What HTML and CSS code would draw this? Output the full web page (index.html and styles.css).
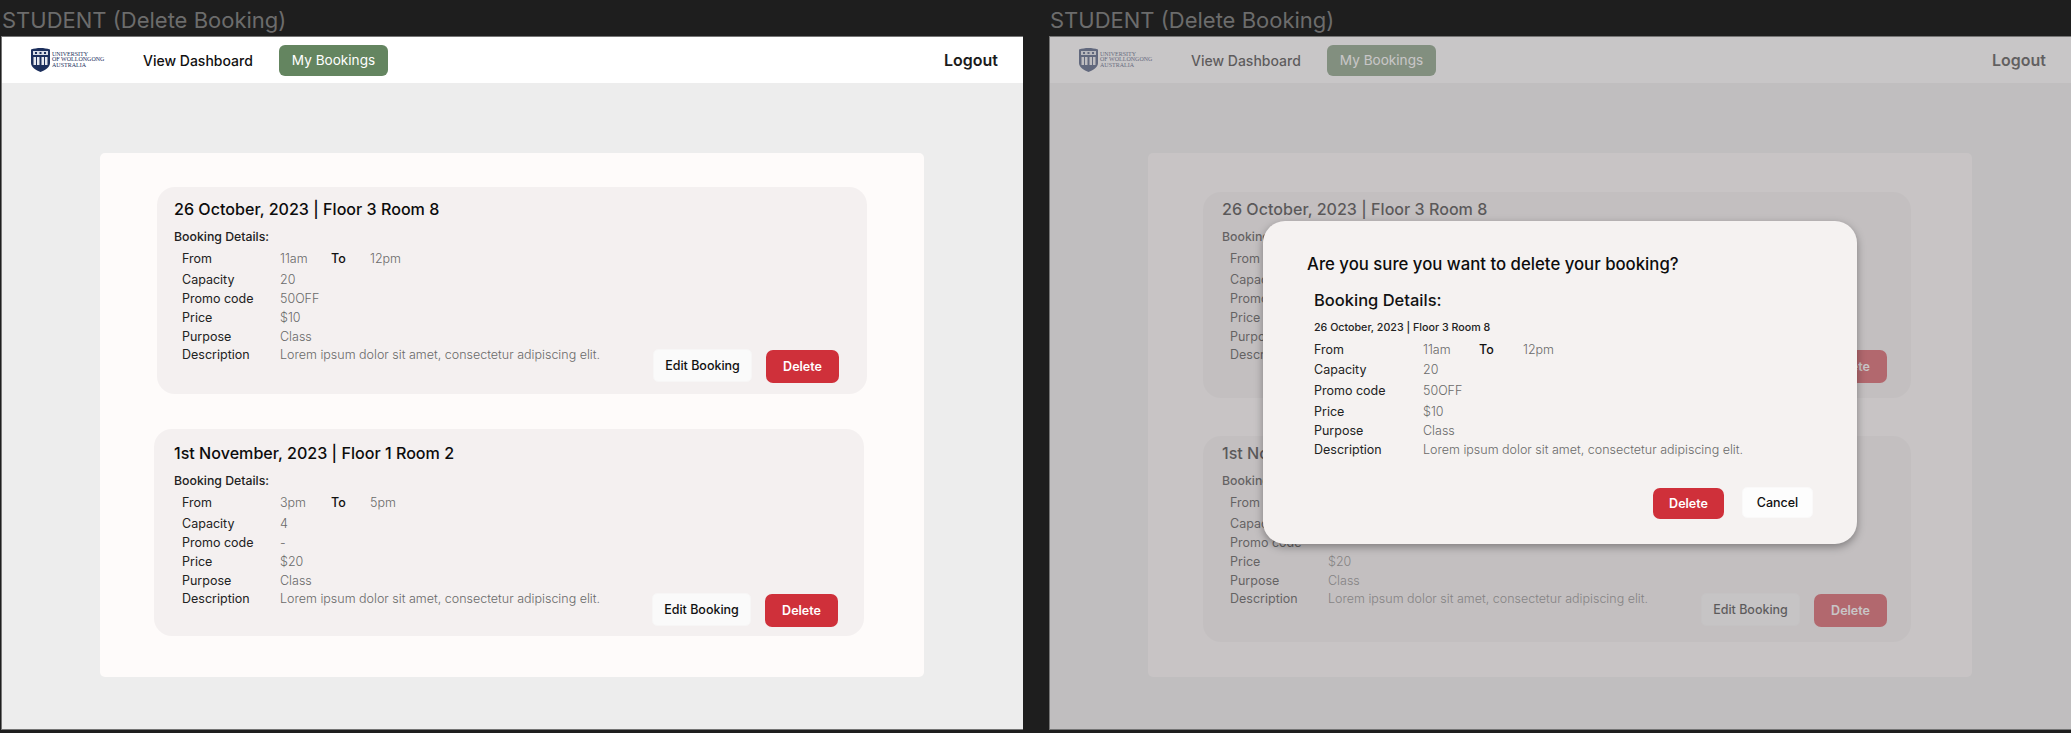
FILE: index.html
```html
<!DOCTYPE html>
<html lang="en">

<head>
  <meta charset="UTF-8">
  <meta name="viewport" content="width=device-width, initial-scale=1.0">
  <title>STUDENT (Delete Booking)</title>
  <link rel="stylesheet" href="styles.css">
</head>

<body>
  <div class="board">

    <section class="screen">
      <h2 class="screen__label">STUDENT (Delete Booking)</h2>
      <div class="frame">
        <nav class="nav">
          <div class="logo">
            <svg class="logo__shield" viewBox="0 0 19 24">
              <path d="M0 1.5 C6 -0.5 13 -0.5 19 1.5 V15 C19 19.5 14 22 9.5 24 C5 22 0 19.5 0 15 Z" fill="#1c2f5c"/>
              <rect x="2" y="3" width="15" height="4" fill="#d9dde6"/>
              <path d="M4 4h2v2H4zM8.500 4h2v2h-2zM13 4h2v2h-2z" fill="#1c2f5c"/>
              <path d="M2.500 9h6v8h-6zM10.500 9h6v8h-6z" fill="#e6e8ee"/>
              <path d="M5 9h1v8H5zM13 9h1v8h-1z" fill="#1c2f5c"/>
            </svg>
            <div class="logo__text">UNIVERSITY<br>OF WOLLONGONG<br>AUSTRALIA</div>
          </div>
          <a class="nav__link">View Dashboard</a>
          <a class="nav__button">My Bookings</a>
          <a class="nav__logout">Logout</a>
        </nav>
        <div class="panel">
          <article class="card card--top">
            <div class="card__info">
              <h3 class="card__title">26 October, 2023 | Floor 3 Room 8</h3>
              <h4 class="card__subtitle">Booking Details:</h4>
              <div class="details">
                <span class="details__label">From</span>
                <div class="details__time">
                  <span class="details__value details__value--from">11am</span>
                  <span class="details__label details__label--to">To</span>
                  <span class="details__value">12pm</span>
                </div>
                <span class="details__label">Capacity</span><span class="details__value">20</span>
                <span class="details__label">Promo code</span><span class="details__value">50OFF</span>
                <span class="details__label">Price</span><span class="details__value">$10</span>
                <span class="details__label">Purpose</span><span class="details__value">Class</span>
                <span class="details__label">Description</span><span class="details__value">Lorem ipsum dolor sit amet, consectetur adipiscing elit.</span>
              </div>
            </div>
            <div class="card__actions">
              <button class="button button--edit">Edit Booking</button>
              <button class="button button--delete">Delete</button>
            </div>
          </article>
          <article class="card card--bottom">
            <div class="card__info">
              <h3 class="card__title">1st November, 2023 | Floor 1 Room 2</h3>
              <h4 class="card__subtitle">Booking Details:</h4>
              <div class="details">
                <span class="details__label">From</span>
                <div class="details__time">
                  <span class="details__value details__value--from">3pm</span>
                  <span class="details__label details__label--to">To</span>
                  <span class="details__value">5pm</span>
                </div>
                <span class="details__label">Capacity</span><span class="details__value">4</span>
                <span class="details__label">Promo code</span><span class="details__value">-</span>
                <span class="details__label">Price</span><span class="details__value">$20</span>
                <span class="details__label">Purpose</span><span class="details__value">Class</span>
                <span class="details__label">Description</span><span class="details__value">Lorem ipsum dolor sit amet, consectetur adipiscing elit.</span>
              </div>
            </div>
            <div class="card__actions">
              <button class="button button--edit">Edit Booking</button>
              <button class="button button--delete">Delete</button>
            </div>
          </article>
        </div>
      </div>
    </section>

    <section class="screen">
      <h2 class="screen__label">STUDENT (Delete Booking)</h2>
      <div class="frame frame--dim">
        <nav class="nav">
          <div class="logo">
            <svg class="logo__shield" viewBox="0 0 19 24">
              <path d="M0 1.5 C6 -0.5 13 -0.5 19 1.5 V15 C19 19.5 14 22 9.5 24 C5 22 0 19.5 0 15 Z" fill="#1c2f5c"/>
              <rect x="2" y="3" width="15" height="4" fill="#d9dde6"/>
              <path d="M4 4h2v2H4zM8.500 4h2v2h-2zM13 4h2v2h-2z" fill="#1c2f5c"/>
              <path d="M2.500 9h6v8h-6zM10.500 9h6v8h-6z" fill="#e6e8ee"/>
              <path d="M5 9h1v8H5zM13 9h1v8h-1z" fill="#1c2f5c"/>
            </svg>
            <div class="logo__text">UNIVERSITY<br>OF WOLLONGONG<br>AUSTRALIA</div>
          </div>
          <a class="nav__link">View Dashboard</a>
          <a class="nav__button">My Bookings</a>
          <a class="nav__logout">Logout</a>
        </nav>
        <div class="panel">
          <article class="card card--top">
            <div class="card__info">
              <h3 class="card__title">26 October, 2023 | Floor 3 Room 8</h3>
              <h4 class="card__subtitle">Booking Details:</h4>
              <div class="details">
                <span class="details__label">From</span>
                <div class="details__time">
                  <span class="details__value details__value--from">11am</span>
                  <span class="details__label details__label--to">To</span>
                  <span class="details__value">12pm</span>
                </div>
                <span class="details__label">Capacity</span><span class="details__value">20</span>
                <span class="details__label">Promo code</span><span class="details__value">50OFF</span>
                <span class="details__label">Price</span><span class="details__value">$10</span>
                <span class="details__label">Purpose</span><span class="details__value">Class</span>
                <span class="details__label">Description</span><span class="details__value">Lorem ipsum dolor sit amet, consectetur adipiscing elit.</span>
              </div>
            </div>
            <div class="card__actions">
              <button class="button button--edit">Edit Booking</button>
              <button class="button button--delete">Delete</button>
            </div>
          </article>
          <article class="card card--bottom">
            <div class="card__info">
              <h3 class="card__title">1st November, 2023 | Floor 1 Room 2</h3>
              <h4 class="card__subtitle">Booking Details:</h4>
              <div class="details">
                <span class="details__label">From</span>
                <div class="details__time">
                  <span class="details__value details__value--from">3pm</span>
                  <span class="details__label details__label--to">To</span>
                  <span class="details__value">5pm</span>
                </div>
                <span class="details__label">Capacity</span><span class="details__value">4</span>
                <span class="details__label">Promo code</span><span class="details__value">-</span>
                <span class="details__label">Price</span><span class="details__value">$20</span>
                <span class="details__label">Purpose</span><span class="details__value">Class</span>
                <span class="details__label">Description</span><span class="details__value">Lorem ipsum dolor sit amet, consectetur adipiscing elit.</span>
              </div>
            </div>
            <div class="card__actions">
              <button class="button button--edit">Edit Booking</button>
              <button class="button button--delete">Delete</button>
            </div>
          </article>
        </div>

        <div class="overlay"></div>

        <div class="modal">
          <h3 class="modal__title">Are you sure you want to delete your booking?</h3>
          <h4 class="modal__subtitle">Booking Details:</h4>
          <p class="modal__booking">26 October, 2023 | Floor 3 Room 8</p>
          <div class="details details--modal">
            <span class="details__label">From</span>
            <div class="details__time">
              <span class="details__value details__value--from">11am</span>
              <span class="details__label details__label--to">To</span>
              <span class="details__value">12pm</span>
            </div>
            <span class="details__label">Capacity</span><span class="details__value">20</span>
            <span class="details__label">Promo code</span><span class="details__value">50OFF</span>
            <span class="details__label">Price</span><span class="details__value">$10</span>
            <span class="details__label">Purpose</span><span class="details__value">Class</span>
            <span class="details__label">Description</span><span class="details__value">Lorem ipsum dolor sit amet, consectetur adipiscing elit.</span>
          </div>
          <div class="modal__actions">
            <button class="button button--delete button--modal">Delete</button>
            <button class="button button--cancel">Cancel</button>
          </div>
        </div>
      </div>
    </section>

  </div>
</body>

</html>
```
FILE: styles.css
```css
* {
  box-sizing: border-box;
}

html,
body {
  height: 100%;
}

body {
  margin: 0;
  background-color: #1e1e1e;
  font-family: Inter, "Liberation Sans", sans-serif;
  color: #111;
  overflow: hidden;
}

h2,
h3,
h4,
p {
  margin: 0;
}

.board {
  display: flex;
  gap: 26px;
  padding-left: 1px;
}

.screen {
  width: 1022px;
}

.screen__label {
  height: 36px;
  padding-left: 1px;
  font-size: 22px;
  font-weight: 400;
  line-height: 40px;
  color: #6c6c6c;
  white-space: nowrap;
}

.frame {
  position: relative;
  height: 694px;
  border: 1px solid #757575;
  border-right: 0;
  background-color: #ededed;
  overflow: hidden;
}

/* nav */

.nav {
  display: flex;
  align-items: center;
  height: 46px;
  padding: 0 25px 0 29px;
  background-color: #fff;
}

.logo {
  display: flex;
  align-items: center;
  width: 112px;
}

.logo__shield {
  width: 19px;
  height: 24px;
}

.logo__text {
  margin-left: 2px;
  font-family: "Liberation Serif", serif;
  font-size: 6px;
  line-height: 5.6px;
  color: #1c2f5c;
  white-space: nowrap;
}

.nav__link {
  width: 136px;
  font-size: 14px;
  font-weight: 500;
  color: #111;
}

.nav__button {
  display: flex;
  align-items: center;
  justify-content: center;
  width: 109px;
  height: 31px;
  border-radius: 6px;
  background-color: #648560;
  font-size: 13.600px;
  font-weight: 400;
  color: #fff;
}

.nav__logout {
  margin-left: auto;
  font-size: 16px;
  font-weight: 600;
  color: #1b1b1b;
}

/* content */

.panel {
  width: 824px;
  height: 524px;
  margin: 70px 0 0 98px;
  padding-top: 34px;
  border-radius: 5px;
  background-color: #fefbfa;
}

.card {
  display: flex;
  justify-content: space-between;
  align-items: flex-end;
  width: 710px;
  height: 207px;
  border-radius: 18px;
  background-color: #f4f0f0;
}

.card--top {
  margin-left: 57px;
  padding: 10px 28px 11px 17px;
}

.card--bottom {
  margin: 35px 0 0 54px;
  padding: 12px 26px 9px 20px;
}

.frame--dim .panel {
  padding-top: 39px;
}

.frame--dim .card {
  width: 708px;
  height: 206px;
  margin-left: 55px;
  padding: 5px 24px 15px 19px;
}

.frame--dim .card--bottom {
  margin-top: 38px;
}

.card__info {
  align-self: flex-start;
}

.card__title {
  font-size: 16.100px;
  font-weight: 500;
  line-height: 24px;
  color: #0c0c0c;
  white-space: nowrap;
}

.card__subtitle {
  margin-top: 7px;
  font-size: 12.300px;
  font-weight: 500;
  line-height: 18px;
  color: #222;
}

.details {
  display: grid;
  grid-template-columns: 98px auto;
  grid-template-rows: 21px 20px 19px 19px 18px 19px;
  align-items: center;
  margin: 2px 0 0 8px;
  font-size: 12.500px;
  white-space: nowrap;
}

.details__time {
  display: flex;
}

.details__label {
  font-weight: 400;
  color: #222;
}

.details__label--to {
  width: 39px;
  font-weight: 500;
  color: #111;
}

.details__value {
  font-weight: 300;
  color: #6a6a6a;
}

.details__value--from {
  width: 51px;
}

.details--modal {
  grid-template-columns: 109px auto;
  grid-template-rows: 20px 21px 21px 20px 19px 19px;
  margin: 3px 0 0;
}

.details--modal .details__value--from {
  width: 56px;
}

.details--modal .details__label--to {
  width: 44px;
}

/* buttons */

.card__actions {
  display: flex;
  align-items: flex-end;
  gap: 14px;
}

.button {
  height: 33px;
  padding: 0;
  border: 0;
  border-radius: 5px;
  font-family: inherit;
  font-size: 12.500px;
  font-weight: 500;
}

.button--edit {
  width: 99px;
  margin-bottom: 1px;
  border: 1px solid #f7f6f6;
  background-color: #fafafa;
  color: #111;
}

.button--delete {
  width: 73px;
  border-radius: 7px;
  background-color: #cf303a;
  color: #fff;
  font-weight: 600;
}

.button--modal {
  width: 71px;
  height: 31px;
  margin-top: 1px;
}

.button--cancel {
  width: 71px;
  height: 31px;
  border: 1px solid #faf9f9;
  background-color: #fdfdfd;
  color: #111;
}

/* dim layer + dialog */

.overlay {
  position: absolute;
  inset: 0;
  background-color: rgba(155, 152, 153, 0.55);
}

.modal {
  position: absolute;
  left: 213px;
  top: 184px;
  width: 594px;
  height: 323px;
  padding: 31px 44px 0 51px;
  border-radius: 22px;
  background-color: #f5f2f1;
  box-shadow: 0 3px 8px rgba(0, 0, 0, 0.35);
}

.modal__title {
  margin-left: -7px;
  font-size: 16.750px;
  font-weight: 500;
  line-height: 24px;
  color: #0c0c0c;
  white-space: nowrap;
}

.modal__subtitle {
  margin-top: 12px;
  font-size: 16.500px;
  font-weight: 500;
  line-height: 24px;
  color: #111;
}

.modal__booking {
  margin-top: 8px;
  font-size: 10.700px;
  font-weight: 500;
  line-height: 16px;
  color: #222;
}

.modal__actions {
  display: flex;
  align-items: flex-start;
  justify-content: flex-end;
  gap: 18px;
  margin-top: 28px;
}
```
